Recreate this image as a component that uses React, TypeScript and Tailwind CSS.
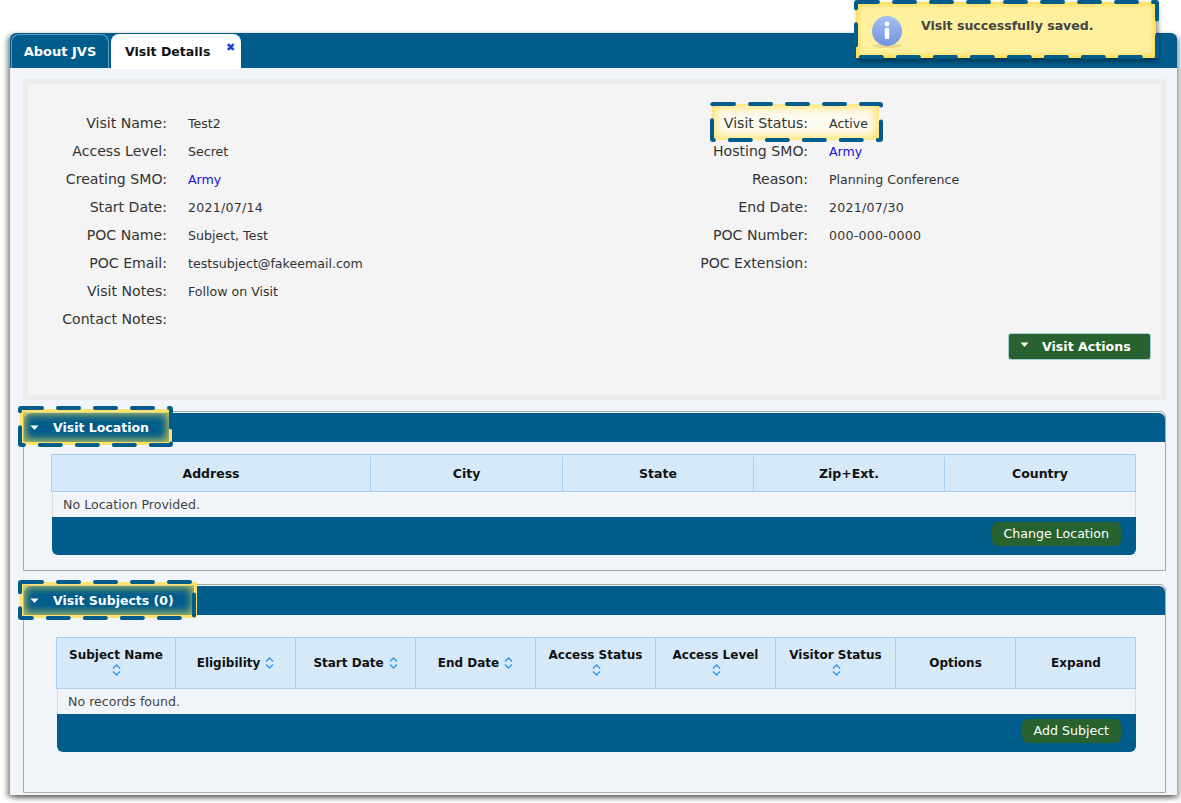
import React from "react";

const DashBox = ({ w, h, className }: { w: number; h: number; className: string }) => (
  <div className={`absolute pointer-events-none ${className}`} style={{ width: w, height: h }}>
    <svg width={w} height={h} className="absolute inset-0">
      <rect x={2} y={2} width={w - 4} height={h - 4} rx={1} fill="none" stroke="#005c8b" strokeWidth={4} strokeLinecap="round" strokeDasharray="21 16" />
    </svg>
  </div>
);

const Caret = ({ className = "" }: { className?: string }) => (
  <svg width="9" height="6" viewBox="0 0 9 6" className={`shrink-0 ${className}`}>
    <path d="M0.5 0.5H8.5L4.5 5Z" fill="#ffffff" />
  </svg>
);

const Sort = ({ className = "" }: { className?: string }) => (
  <svg width="9" height="12" viewBox="0 0 9 12" className={`inline-block shrink-0 ${className}`}>
    <path d="M1 4.5L4.5 1L8 4.5M1 7.5L4.5 11L8 7.5" fill="none" stroke="#2f96ea" strokeWidth="1.4" />
  </svg>
);

const InfoRow = ({ label, value, blue, num }: { label: string; value?: string; blue?: boolean; num?: boolean }) => (
  <div className="relative z-10 flex h-[28px] items-center">
    <div className="w-[139px] shrink-0 pt-[2px] text-right text-[14.1px] text-[#333]">{label}</div>
    <div className={`ml-[21px] pt-[2px] text-[12.6px] ${num ? "tracking-[0.25px]" : ""} ${blue ? "text-[#1a10d8]" : "text-[#333]"}`}>{value}</div>
  </div>
);

const Th = ({ children, className = "" }: { children: React.ReactNode; className?: string }) => (
  <div className={`flex items-center justify-center border-r border-[#a9cfee] font-bold text-[#111] last:border-r-0 ${className}`}>{children}</div>
);

const GreenBtn = ({ label }: { label: string }) => (
  <button className="mb-[5px] flex h-[24px] items-center rounded-[6px] bg-[#27622f] px-[12px] pt-[2px] text-[12.6px] text-white">{label}</button>
);

const PanelHead = ({ title }: { title: string }) => (
  <div className="flex h-[29px] items-center rounded-t-[6px] bg-[#005c8b] pl-[6px]">
    <Caret />
    <span className="ml-[14px] pt-[2px] text-[12.5px] font-bold text-white">{title}</span>
  </div>
);

export default function App() {
  return (
    <div className="relative h-[803px] w-[1181px] overflow-hidden bg-white pl-[10px] pt-[33px] font-['DejaVu_Sans',sans-serif]">
      <div className="h-[762px] w-[1167px] rounded-t-[6px] bg-[#f1f5f9] shadow-[-3px_2px_5px_rgba(0,0,0,0.45),3px_3px_5px_rgba(0,0,0,0.35)]">
        <div className="flex h-[35px] items-end gap-[2px] rounded-t-[6px] bg-[#005c8b] pl-[1px]">
          <div className="flex h-[34px] w-[98px] items-center justify-center rounded-t-[8px] border border-b-0 border-[#5f9cc0] text-[13px] font-bold text-white">About JVS</div>
          <div className="relative -mb-px flex h-[35px] w-[130px] items-center rounded-t-[8px] bg-white pl-[14px] pt-[2px] text-[12.55px] font-bold text-[#111]">
            Visit Details
            <span className="absolute left-[115px] top-[7px] text-[11px] font-bold leading-[14px] text-[#1c3fd6]">✖</span>
          </div>
        </div>

        <div className="px-[13px] pt-[11px]">
          <div className="relative h-[321px] w-[1143px] border-[5px] border-[#ececec] bg-[#f4f4f4] pt-[25px]">
            <div className="grid grid-cols-[641px_1fr]">
              <div>
                <InfoRow label="Visit Name:" value="Test2" />
                <InfoRow label="Access Level:" value="Secret" />
                <InfoRow label="Creating SMO:" value="Army" blue />
                <InfoRow label="Start Date:" value="2021/07/14" num />
                <InfoRow label="POC Name:" value="Subject, Test" />
                <InfoRow label="POC Email:" value="testsubject@fakeemail.com" />
                <InfoRow label="Visit Notes:" value="Follow on Visit" />
                <InfoRow label="Contact Notes:" />
              </div>
              <div>
                <div className="relative">
                  <div className="absolute left-[43px] top-[-5px] h-[36px] w-[167px] bg-[#fdfaf0] shadow-[inset_0_0_9px_4px_#ffe36e]" />
                  <InfoRow label="Visit Status:" value="Active" />
                  <DashBox w={173} h={40} className="z-20 left-[41px] top-[-7px]" />
                </div>
                <InfoRow label="Hosting SMO:" value="Army" blue />
                <InfoRow label="Reason:" value="Planning Conference" />
                <InfoRow label="End Date:" value="2021/07/30" num />
                <InfoRow label="POC Number:" value="000-000-0000" num />
                <InfoRow label="POC Extension:" />
              </div>
            </div>
            <div className="absolute left-[980px] top-[249px] flex h-[27px] w-[143px] items-center rounded-[3px] border border-[#a8cfd8] bg-[#27622f] pl-[11px] text-[12.6px] font-bold text-white">
              <Caret className="mb-[4px]" />
              <span className="ml-[13px] pt-[2px]">Visit Actions</span>
            </div>
          </div>

          <div className="relative mt-[11px] h-[160px] w-[1143px] rounded-t-[6px] border border-[#a9a9a9] pt-px">
            <PanelHead title="Visit Location" />
            <div className="ml-[28px] mt-[12px] w-[1084px]">
              <div className="-ml-px grid h-[38px] grid-cols-[319px_192px_191px_191px_1fr] border border-[#a9cfee] bg-[#d6e9f8] pt-[2px] text-[12.5px]">
                <Th>Address</Th><Th>City</Th><Th>State</Th><Th>Zip+Ext.</Th><Th>Country</Th>
              </div>
              <div className="flex h-[25px] items-center border-x border-[#dcdcdc] pl-[10px] pt-[2px] text-[12.6px] text-[#444]">No Location Provided.</div>
              <div className="flex h-[38px] items-center justify-end rounded-b-[6px] bg-[#005c8b] pr-[15px]">
                <GreenBtn label="Change Location" />
              </div>
            </div>
            <div className="absolute left-[-4px] top-[-3px] h-[36px] w-[152px] rounded-[2px] shadow-[inset_0_0_0_3px_#ffe36e,inset_0_0_8px_5px_#c8c65a]" />
            <DashBox w={155} h={41} className="left-[-6px] top-[-6px]" />
          </div>

          <div className="relative mt-[13px] h-[209px] w-[1143px] rounded-t-[6px] border border-[#a9a9a9] pt-px">
            <PanelHead title="Visit Subjects (0)" />
            <div className="ml-[33px] mt-[22px] w-[1079px]">
              <div className="-ml-px grid h-[52px] grid-cols-[119px_repeat(8,120px)] border border-[#a9cfee] bg-[#d6e9f8] text-[12px]">
                <Th className="flex-col pb-[3px] leading-[15px]"><span>Subject Name</span><Sort className="ml-px mt-px" /></Th>
                <Th className="gap-[5px]"><span>Eligibility</span><Sort /></Th>
                <Th className="gap-[5px]"><span>Start Date</span><Sort /></Th>
                <Th className="gap-[5px]"><span>End Date</span><Sort /></Th>
                <Th className="flex-col pb-[3px] leading-[15px]"><span>Access Status</span><Sort className="ml-px mt-px" /></Th>
                <Th className="flex-col pb-[3px] leading-[15px]"><span>Access Level</span><Sort className="ml-px mt-px" /></Th>
                <Th className="flex-col pb-[3px] leading-[15px]"><span>Visitor Status</span><Sort className="ml-px mt-px" /></Th>
                <Th>Options</Th>
                <Th>Expand</Th>
              </div>
              <div className="flex h-[25px] items-center border-x border-[#dcdcdc] pl-[10px] pt-[2px] text-[12.6px] text-[#444]">No records found.</div>
              <div className="flex h-[38px] items-center justify-end rounded-b-[6px] bg-[#005c8b] pr-[15px]">
                <GreenBtn label="Add Subject" />
              </div>
            </div>
            <div className="absolute left-[-4px] top-[-3px] h-[36px] w-[177px] rounded-[2px] shadow-[inset_0_0_0_3px_#ffe36e,inset_0_0_8px_5px_#c8c65a]" />
            <DashBox w={178} h={40} className="left-[-6px] top-[-5px]" />
          </div>
        </div>
      </div>

      <div className="absolute left-[856px] top-[2px] flex h-[56px] w-[300px] items-start bg-[#fff0a0] pl-[15px] pt-[14px] shadow-[inset_0_0_5px_3px_#ffdc50,2px_3px_5px_rgba(0,0,0,0.45)]">
        <svg width="32" height="34" viewBox="0 0 32 34" className="shrink-0">
          <defs>
            <linearGradient id="ig" x1="0" y1="0" x2="0" y2="1">
              <stop offset="0" stopColor="#a6c0ee" />
              <stop offset="1" stopColor="#6f94e0" />
            </linearGradient>
          </defs>
          <ellipse cx="16" cy="30" rx="15" ry="2" fill="#e8d890" />
          <circle cx="16" cy="15" r="15" fill="url(#ig)" />
          <circle cx="16" cy="8" r="2.4" fill="#ffffff" />
          <rect x="13.8" y="12" width="4.4" height="11" rx="1" fill="#ffffff" />
        </svg>
        <span className="ml-[18px] pt-px text-[12.55px] font-bold text-[#444]">Visit successfully saved.</span>
      </div>
      <DashBox w={305} h={59} className="left-[854px] top-0" />
    </div>
  );
}
